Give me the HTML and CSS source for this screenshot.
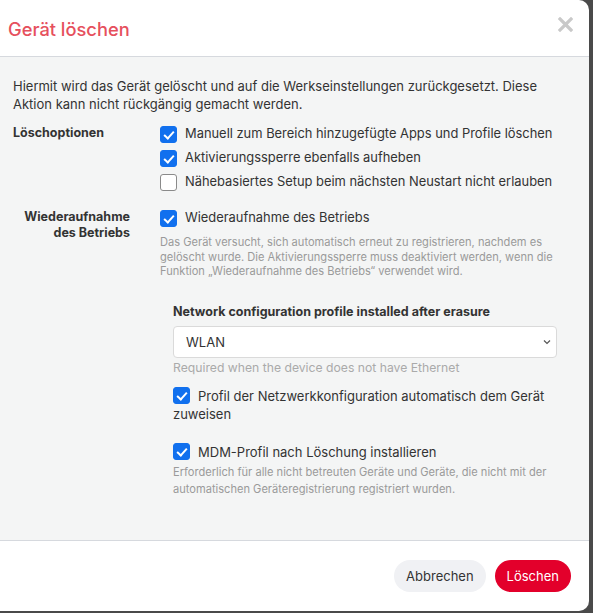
FILE: index.html
```html
<!DOCTYPE html>
<html lang="de">
<head>
<meta charset="utf-8">
<link rel="stylesheet" href="styles.css">
</head>
<body>
<div class="dialog">
  <header class="head">
    <h1 class="title">Gerät löschen</h1>
    <span class="close">
      <svg width="15" height="15" viewBox="0 0 15 15"><path d="M2 2 L13 13 M13 2 L2 13" stroke="#c9c9c9" stroke-width="3.2" stroke-linecap="square"/></svg>
    </span>
  </header>
  <main class="body">
    <p class="intro">Hiermit wird das Gerät gelöscht und auf die Werkseinstellungen zurückgesetzt. Diese Aktion kann nicht rückgängig gemacht werden.</p>
    <div class="row">
      <div class="label">Löschoptionen</div>
      <div class="field">
        <label class="check"><span class="box on"></span>Manuell zum Bereich hinzugefügte Apps und Profile löschen</label>
        <label class="check"><span class="box on"></span>Aktivierungssperre ebenfalls aufheben</label>
        <label class="check"><span class="box"></span>Nähebasiertes Setup beim nächsten Neustart nicht erlauben</label>
      </div>
    </div>
    <div class="row row2">
      <div class="label right">Wiederaufnahme<br>des Betriebs</div>
      <div class="field">
        <label class="check"><span class="box on"></span>Wiederaufnahme des Betriebs</label>
        <p class="hint hint1">Das Gerät versucht, sich automatisch erneut zu registrieren, nachdem es gelöscht wurde. Die Aktivierungssperre muss deaktiviert werden, wenn die Funktion „Wiederaufnahme des Betriebs“ verwendet wird.</p>
        <div class="sub">
          <div class="sublabel">Network configuration profile installed after erasure</div>
          <div class="select"><span>WLAN</span>
            <svg width="10" height="10" viewBox="0 0 10 10"><path d="M2 3.5 L5 6.5 L8 3.5" fill="none" stroke="#555" stroke-width="1.2"/></svg>
          </div>
          <div class="req">Required when the device does not have Ethernet</div>
          <p class="inline"><span class="box on"></span>Profil der Netzwerkkonfiguration automatisch dem Gerät zuweisen</p>
          <p class="inline mdm"><span class="box on"></span>MDM-Profil nach Löschung installieren</p>
          <p class="hint hint2">Erforderlich für alle nicht betreuten Geräte und Geräte, die nicht mit der automatischen Geräteregistrierung registriert wurden.</p>
        </div>
      </div>
    </div>
  </main>
  <footer class="foot">
    <button class="btn cancel">Abbrechen</button>
    <button class="btn danger">Löschen</button>
  </footer>
</div>
</body>
</html>
```
FILE: styles.css
```css
* { box-sizing: border-box; }
html, body { margin: 0; padding: 0; }
body {
  background: #4a4a4a;
  width: 593px;
  height: 613px;
  overflow: hidden;
  font-family: Inter, "Noto Sans", sans-serif;
  color: #333;
}
.dialog {
  width: 599px;
  height: 611px;
  margin-left: -10px;
  background: #fff;
  border-radius: 0 10px 10px 10px;
  display: flex;
  flex-direction: column;
  overflow: hidden;
}
.head {
  height: 57px;
  border-bottom: 1px solid #d6d9de;
  display: flex;
  align-items: center;
  justify-content: space-between;
  padding: 0 16px 0 18px;
  flex: none;
}
.title {
  margin: 0;
  font-size: 18.3px;
  font-weight: 500;
  color: #e6505d;
  padding-top: 1px;
}
.close { display: flex; margin-top: -7px; }
.body {
  background: #f4f5f5;
  height: 484px;
  flex: none;
  padding: 20px 19px 0 23px;
  border-bottom: 1px solid #d6d9de;
  font-size: 13px;
}
.intro { margin: 0 0 9px; line-height: 18px; }
.row { display: grid; grid-template-columns: 147px 1fr; }
.row2 { margin-top: 12px; }
.label { font-weight: 700; font-size: 12.5px; line-height: 18px; padding-top: 2px; }
.label.right { text-align: right; padding-right: 30px; line-height: 15.5px; padding-top: 3px; }
.field { display: flex; flex-direction: column; }
.check { display: flex; align-items: center; gap: 8px; height: 24px; line-height: 18px; font-size: 12.9px; }
.box {
  width: 17px; height: 17px; flex: none;
  border-radius: 3px;
  border: 1px solid #8a8a8a;
  background: #fff;
  display: inline-block;
  position: relative;
}
.box.on { background: #1170ee; border-color: #1170ee; }
.box.on::after {
  content: "";
  position: absolute;
  left: 5px; top: 2px;
  width: 4px; height: 8px;
  border: solid #fff;
  border-width: 0 2.2px 2.2px 0;
  transform: rotate(42deg);
}
.hint { margin: 0; font-size: 11.1px; color: #9a9a9a; }
.hint1 { margin-top: 5px; line-height: 14.5px; }
.sub { padding: 0 13px; margin-top: 24px; }
.sublabel { font-weight: 700; font-size: 12.5px; line-height: 18px; }
.select {
  margin-top: 5px;
  height: 32px;
  background: #fff;
  border: 1px solid #dadada;
  border-radius: 4px;
  display: flex;
  align-items: center;
  justify-content: space-between;
  padding: 0 4px 0 12px;
  font-size: 13px;
}
.req { margin-top: 1px; font-size: 12.2px; color: #aaa; line-height: 18px; }
.inline { margin: 10px 0 0; line-height: 18px; }
.inline .box { vertical-align: -3px; margin-right: 8px; }
.inline.mdm { margin-top: 20px; }
.hint2 { margin-top: 3px; line-height: 17px; }
.foot {
  flex: 1;
  display: flex;
  justify-content: flex-end;
  align-items: flex-start;
  gap: 9px;
  padding: 19px 18px 0 0;
}
.btn {
  height: 32px;
  border: none;
  border-radius: 16px;
  font-family: Inter, "Noto Sans", sans-serif;
  font-size: 13px;
  padding: 0 12px;
}
.cancel { background: #f0f1f4; color: #333; }
.danger { background: #e3002b; color: #fff; }
```
